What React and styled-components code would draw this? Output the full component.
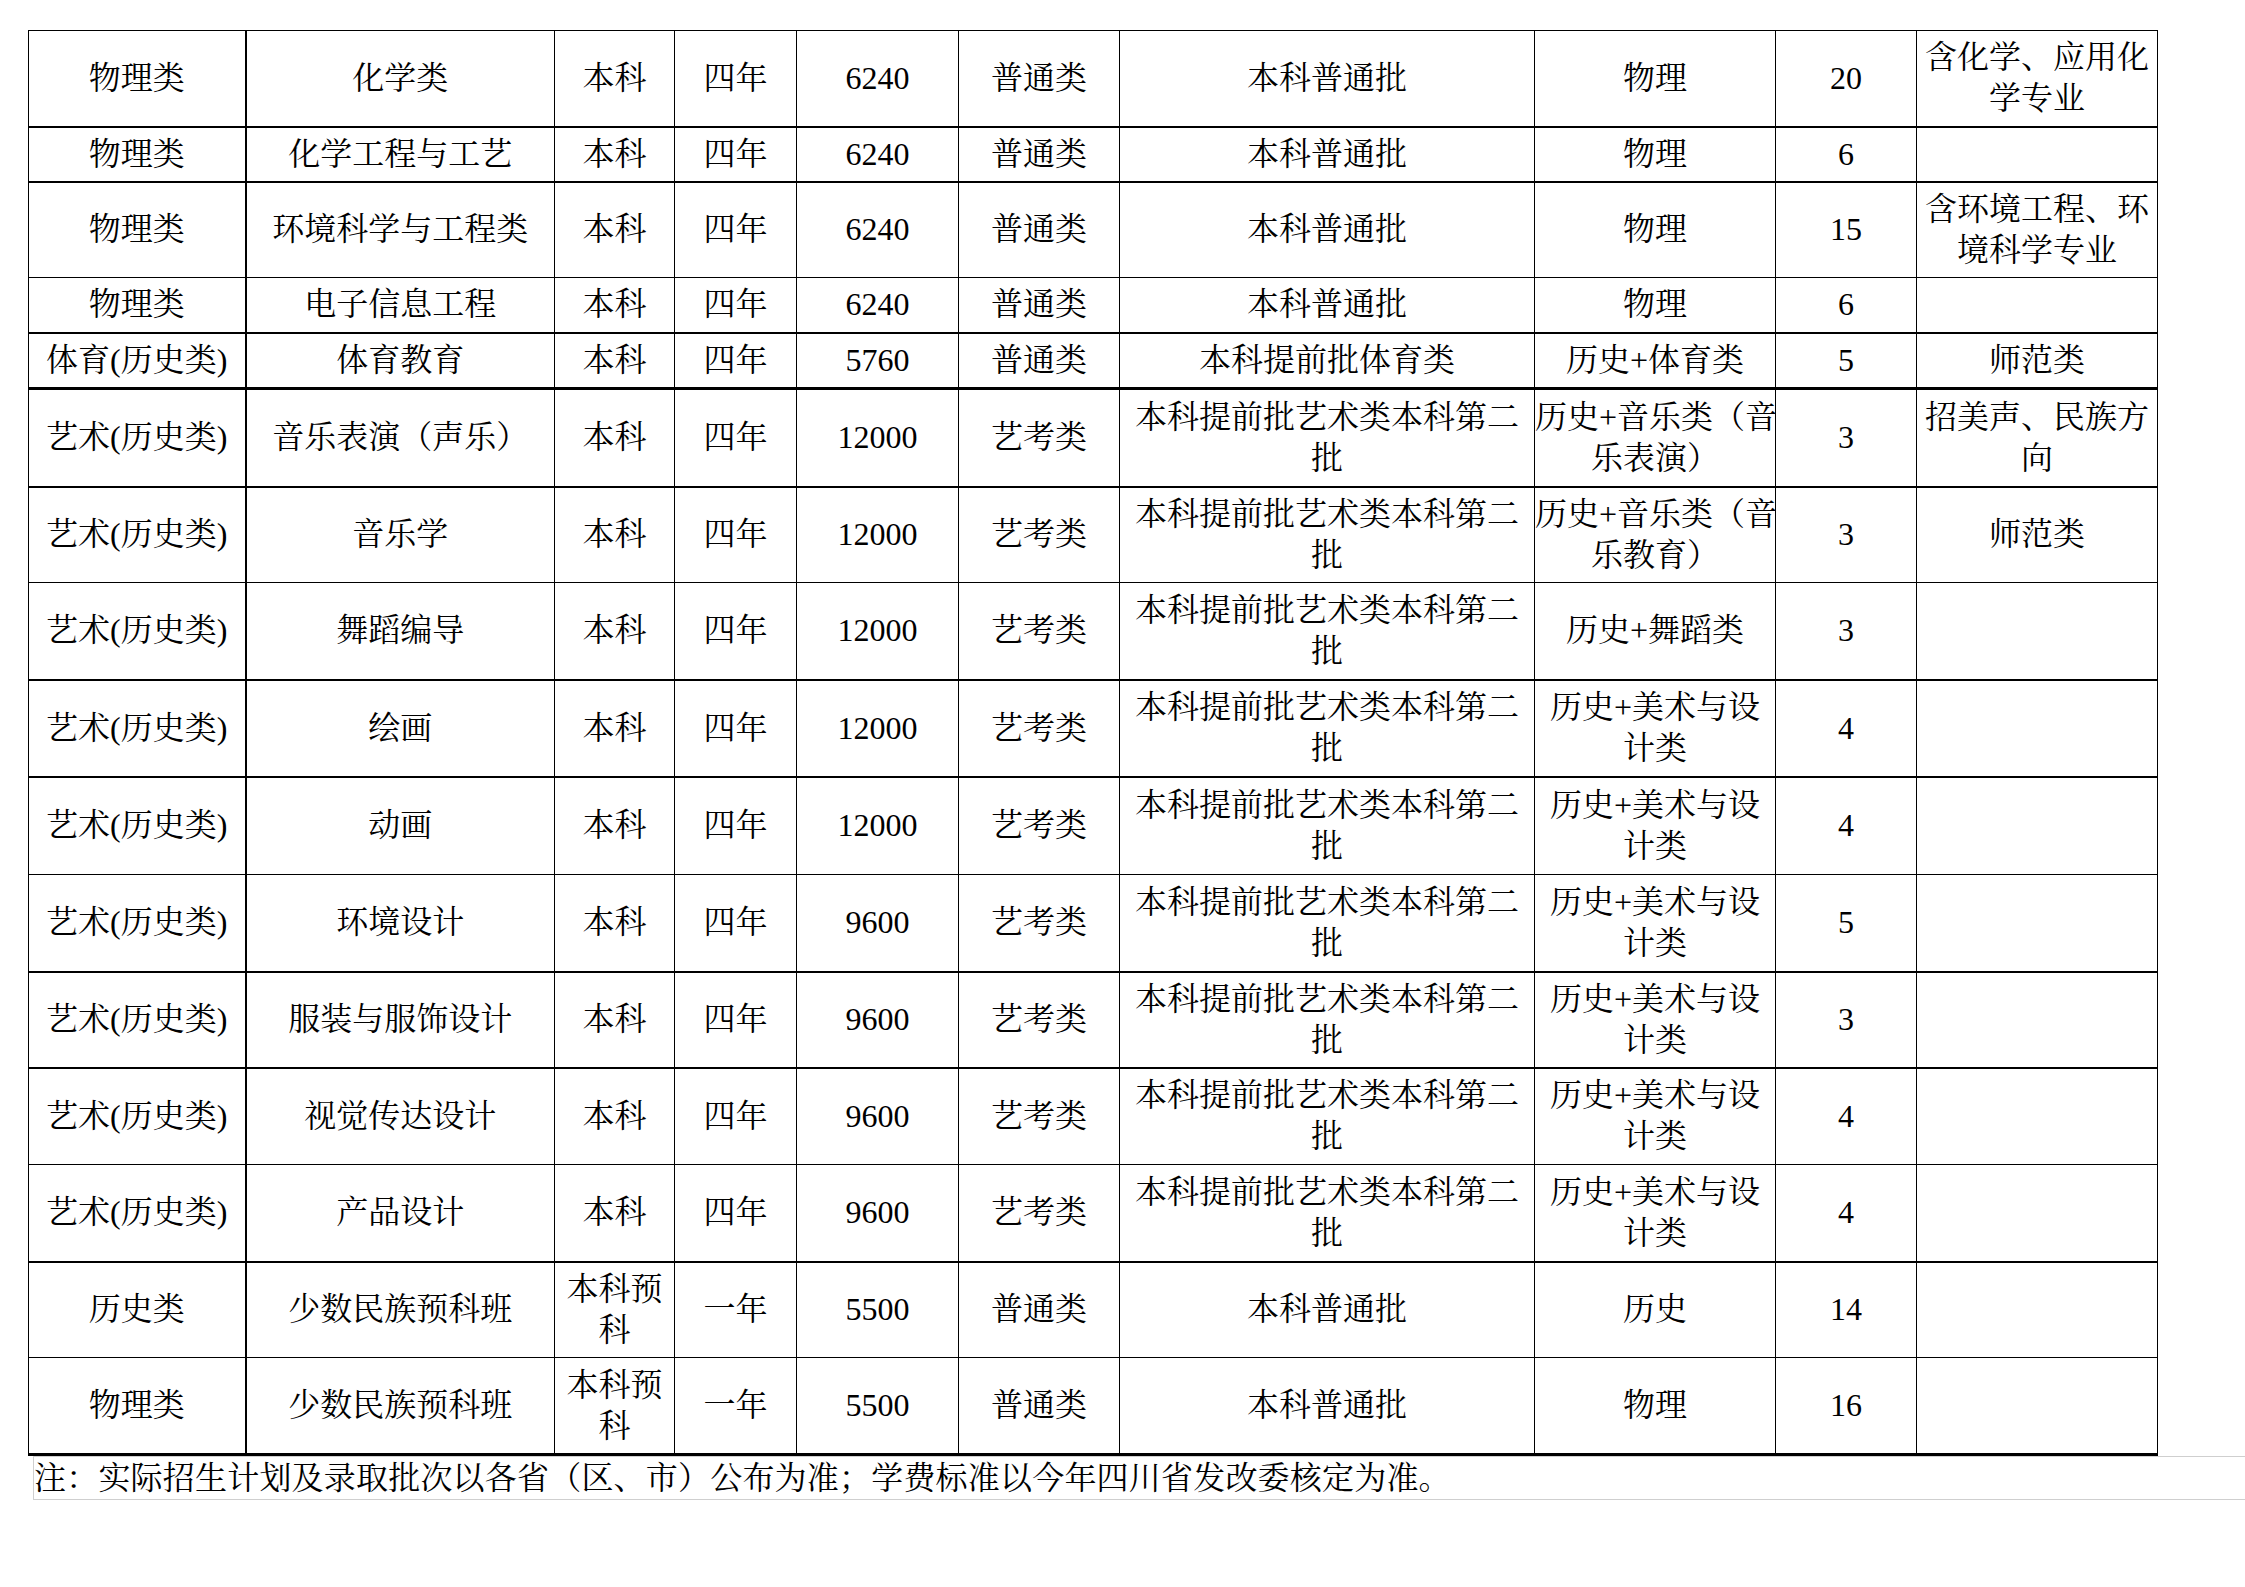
import React from 'react';
import styled, { createGlobalStyle } from 'styled-components';

const GlobalStyle = createGlobalStyle`
    html, body {
        margin: 0;
        background: #fff;
    }
`;

const Page = styled.div`
    padding: 30px 0 40px 28px;
    font-family: "Liberation Serif", "Noto Serif CJK SC", "Noto Sans CJK SC", serif;
    color: #000;
`;

const Sheet = styled.table`
    table-layout: fixed;
    border-collapse: collapse;
    width: 2129px;
    font-size: 32px;
`;

const Row = styled.tr`
    height: ${({ $h }) => $h}px;
    > td {
        border-bottom: ${({ $rule }) => $rule}px solid #000;
    }
`;

const Cell = styled.td`
    border: 1px solid #000;
    padding: 0;
    text-align: center;
    vertical-align: middle;
    white-space: pre;
    line-height: 41px;
    font-weight: 400;
    &:first-child {
        border-right-width: 2px;
    }
`;

const Note = styled.div`
    margin-left: 5px;
    height: 42px;
    display: flex;
    align-items: center;
    border: 1px solid #cfcfcf;
    border-right: none;
    font-size: 32px;
    line-height: 42px;
    letter-spacing: 0.2px;
    white-space: nowrap;
`;

const columns = [217, 309, 120, 122, 162, 161, 415, 241, 141, 241];

const BATCH_ART = '本科提前批艺术类本科第二\n批';
const ART = '艺术(历史类)';
const DESIGN = '历史+美术与设\n计类';

const rows = [
    { h: 96, rule: 2, cells: ['物理类', '化学类', '本科', '四年', '6240', '普通类', '本科普通批', '物理', '20', '含化学、应用化\n学专业'] },
    { h: 55, rule: 2, cells: ['物理类', '化学工程与工艺', '本科', '四年', '6240', '普通类', '本科普通批', '物理', '6', ''] },
    { h: 96, rule: 1, cells: ['物理类', '环境科学与工程类', '本科', '四年', '6240', '普通类', '本科普通批', '物理', '15', '含环境工程、环\n境科学专业'] },
    { h: 55, rule: 2, cells: ['物理类', '电子信息工程', '本科', '四年', '6240', '普通类', '本科普通批', '物理', '6', ''] },
    { h: 56, rule: 3, cells: ['体育(历史类)', '体育教育', '本科', '四年', '5760', '普通类', '本科提前批体育类', '历史+体育类', '5', '师范类'] },
    { h: 98, rule: 2, cells: [ART, '音乐表演（声乐）', '本科', '四年', '12000', '艺考类', BATCH_ART, '历史+音乐类（音\n乐表演）', '3', '招美声、民族方\n向'] },
    { h: 96, rule: 1, cells: [ART, '音乐学', '本科', '四年', '12000', '艺考类', BATCH_ART, '历史+音乐类（音\n乐教育）', '3', '师范类'] },
    { h: 97, rule: 2, cells: [ART, '舞蹈编导', '本科', '四年', '12000', '艺考类', BATCH_ART, '历史+舞蹈类', '3', ''] },
    { h: 97, rule: 2, cells: [ART, '绘画', '本科', '四年', '12000', '艺考类', BATCH_ART, DESIGN, '4', ''] },
    { h: 98, rule: 1, cells: [ART, '动画', '本科', '四年', '12000', '艺考类', BATCH_ART, DESIGN, '4', ''] },
    { h: 97, rule: 2, cells: [ART, '环境设计', '本科', '四年', '9600', '艺考类', BATCH_ART, DESIGN, '5', ''] },
    { h: 96, rule: 2, cells: [ART, '服装与服饰设计', '本科', '四年', '9600', '艺考类', BATCH_ART, DESIGN, '3', ''] },
    { h: 97, rule: 1, cells: [ART, '视觉传达设计', '本科', '四年', '9600', '艺考类', BATCH_ART, DESIGN, '4', ''] },
    { h: 97, rule: 2, cells: [ART, '产品设计', '本科', '四年', '9600', '艺考类', BATCH_ART, DESIGN, '4', ''] },
    { h: 96, rule: 1, cells: ['历史类', '少数民族预科班', '本科预\n科', '一年', '5500', '普通类', '本科普通批', '历史', '14', ''] },
    { h: 97, rule: 3, cells: ['物理类', '少数民族预科班', '本科预\n科', '一年', '5500', '普通类', '本科普通批', '物理', '16', ''] },
];

const App = () => (
    <Page>
        <GlobalStyle />
        <Sheet>
            <colgroup>
                { columns.map((w, i) => <col key={ i } width={ w } />) }
            </colgroup>
            <tbody>
                {
                    rows.map((row, r) => (
                        <Row key={ r } $h={ row.h } $rule={ row.rule }>
                            { row.cells.map((text, c) => <Cell key={ c }>{ text }</Cell>) }
                        </Row>
                    ))
                }
            </tbody>
        </Sheet>
        <Note>注：实际招生计划及录取批次以各省（区、市）公布为准；学费标准以今年四川省发改委核定为准。</Note>
    </Page>
);

export default App;
